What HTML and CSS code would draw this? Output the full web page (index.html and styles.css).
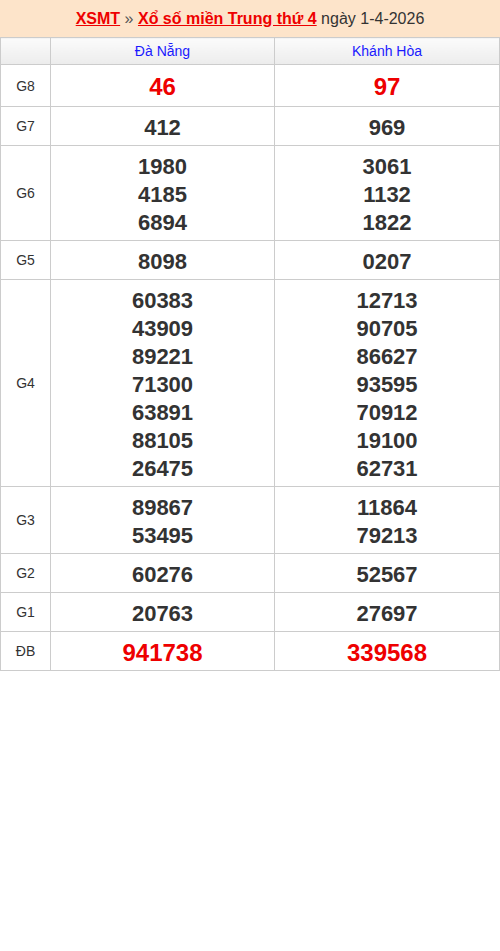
FILE: index.html
```html
<!DOCTYPE html>
<html lang="vi">
<head>
<meta charset="utf-8">
<title>XSMT</title>
<link rel="stylesheet" href="styles.css">
</head>
<body>
<div class="title">
  <a href="#" class="link">XSMT</a> <span class="sep">»</span> <a href="#" class="link">Xổ số miền Trung thứ 4</a> ngày 1-4-2026
</div>
<table class="results">
  <colgroup><col class="c-label"><col class="c-mid"><col></colgroup>
  <thead>
    <tr><th></th><th>Đà Nẵng</th><th>Khánh Hòa</th></tr>
  </thead>
  <tbody>
    <tr class="r-g8"><td class="lbl">G8</td><td class="num big red">46</td><td class="num big red">97</td></tr>
    <tr><td class="lbl">G7</td><td class="num">412</td><td class="num">969</td></tr>
    <tr><td class="lbl">G6</td><td class="num"><div>1980</div><div>4185</div><div>6894</div></td><td class="num"><div>3061</div><div>1132</div><div>1822</div></td></tr>
    <tr><td class="lbl">G5</td><td class="num">8098</td><td class="num">0207</td></tr>
    <tr><td class="lbl">G4</td><td class="num"><div>60383</div><div>43909</div><div>89221</div><div>71300</div><div>63891</div><div>88105</div><div>26475</div></td><td class="num"><div>12713</div><div>90705</div><div>86627</div><div>93595</div><div>70912</div><div>19100</div><div>62731</div></td></tr>
    <tr><td class="lbl">G3</td><td class="num"><div>89867</div><div>53495</div></td><td class="num"><div>11864</div><div>79213</div></td></tr>
    <tr><td class="lbl">G2</td><td class="num">60276</td><td class="num">52567</td></tr>
    <tr><td class="lbl">G1</td><td class="num">20763</td><td class="num">27697</td></tr>
    <tr><td class="lbl">ĐB</td><td class="num db red">941738</td><td class="num db red">339568</td></tr>
  </tbody>
</table>
</body>
</html>
```
FILE: styles.css
```css
html, body {
  margin: 0;
  padding: 0;
  background: #fff;
  font-family: "Liberation Sans", Arial, sans-serif;
  color: #333;
}
.title {
  background: #fde4ca;
  text-align: center;
  font-size: 16px;
  line-height: 21px;
  padding: 8px 0;
  color: #333;
}
.title .link {
  color: #ee0000;
  font-weight: bold;
  text-decoration: underline;
}
.title .sep {
  color: #555;
}
.results {
  width: 500px;
  border-collapse: collapse;
  table-layout: fixed;
}
.c-label {
  width: 50px;
}
.c-mid {
  width: 224px;
}
.results th,
.results td {
  border: 1px solid #cccccc;
  text-align: center;
  padding: 0;
}
.results th {
  background: linear-gradient(#fbfbfb, #ececec);
  color: #1a1aff;
  font-weight: normal;
  font-size: 14px;
  line-height: 16px;
  padding: 5px 0;
}
.lbl {
  font-size: 14px;
  line-height: 16px;
  color: #333;
  vertical-align: middle;
}
.num {
  font-size: 22px;
  font-weight: bold;
  line-height: 28px;
  padding: 7px 0 3px !important;
  color: #333;
  vertical-align: top;
}
.num.big {
  font-size: 24px;
  line-height: 31px;
  padding: 6px 0 4px !important;
}
.num.db {
  font-size: 24px;
}
.red {
  color: #ee0000 !important;
}
```
